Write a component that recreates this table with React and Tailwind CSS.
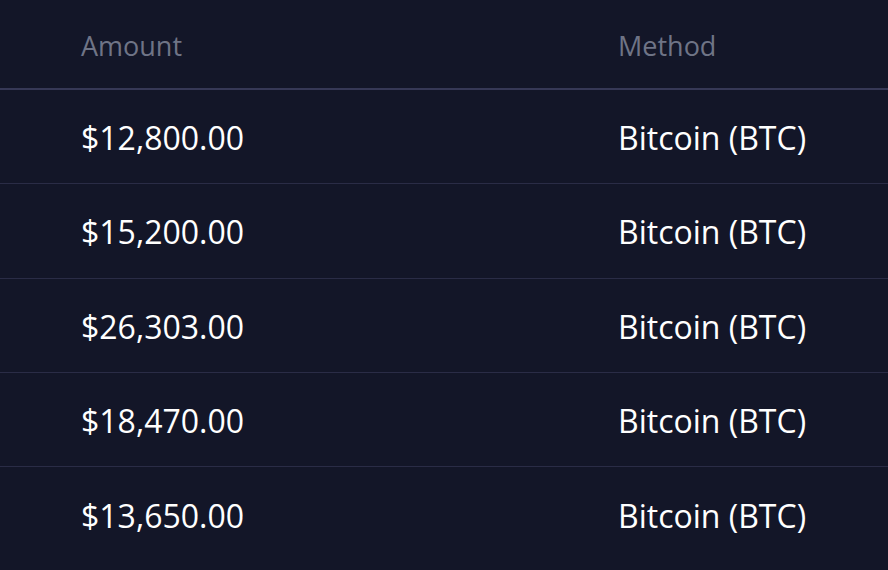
import React from "react";

const rows = ["$12,800.00", "$15,200.00", "$26,303.00", "$18,470.00", "$13,650.00"];

export default function App() {
  return (
    <div
      className="w-[888px] h-[570px] overflow-hidden bg-[#131628]"
      style={{ fontFamily: '"Open Sans", "Noto Sans", sans-serif' }}
    >
      <div className="flex h-[90px] items-center pl-[81px] border-b-[2px] border-[#363856] text-[27px] text-[#6f7486] pt-[4px]">
        <div className="w-[537px]">Amount</div>
        <div>Method</div>
      </div>
      {rows.map((r, i) => (
        <div
          key={i}
          className="flex h-[94.3px] items-center pl-[81px] pt-[3px] border-b border-[#2a2c46] last:border-b-0 text-[32px] text-white"
        >
          <div className="w-[537px]">{r}</div>
          <div>Bitcoin (BTC)</div>
        </div>
      ))}
    </div>
  );
}
